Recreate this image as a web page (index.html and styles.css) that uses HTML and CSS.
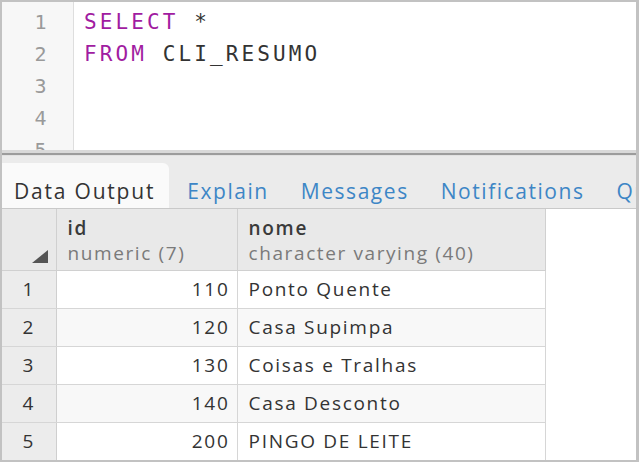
FILE: index.html
```html
<!DOCTYPE html>
<html>
<head>
<meta charset="utf-8">
<link rel="stylesheet" href="styles.css">
</head>
<body>
<div class="frame">
  <div class="editor">
    <div class="gutter">
      <div class="ln">1</div>
      <div class="ln">2</div>
      <div class="ln">3</div>
      <div class="ln">4</div>
      <div class="ln">5</div>
    </div>
    <div class="code">
      <div class="line"><span class="kw">SELECT</span> *</div>
      <div class="line"><span class="kw">FROM</span> CLI_RESUMO</div>
      <div class="line"></div>
      <div class="line"></div>
      <div class="line"></div>
    </div>
  </div>
  <div class="splitter"></div>
  <div class="tabs">
    <div class="tab active">Data Output</div>
    <div class="tab">Explain</div>
    <div class="tab">Messages</div>
    <div class="tab">Notifications</div>
    <div class="tab">Query History</div>
  </div>
  <div class="gridwrap">
    <table class="grid">
      <colgroup>
        <col class="c-rn"><col class="c-id"><col class="c-nome">
      </colgroup>
      <thead>
        <tr>
          <th class="rn-head"><span class="sort"></span></th>
          <th><div class="cname">id</div><div class="ctype">numeric (7)</div></th>
          <th><div class="cname">nome</div><div class="ctype">character varying (40)</div></th>
        </tr>
      </thead>
      <tbody>
        <tr><td class="rn">1</td><td class="num">110</td><td>Ponto Quente</td></tr>
        <tr class="alt"><td class="rn">2</td><td class="num">120</td><td>Casa Supimpa</td></tr>
        <tr><td class="rn">3</td><td class="num">130</td><td>Coisas e Tralhas</td></tr>
        <tr class="alt"><td class="rn">4</td><td class="num">140</td><td>Casa Desconto</td></tr>
        <tr><td class="rn">5</td><td class="num">200</td><td>PINGO DE LEITE</td></tr>
      </tbody>
    </table>
  </div>
</div>
</body>
</html>
```
FILE: styles.css
```css
* { box-sizing: border-box; }
html, body { margin: 0; padding: 0; background: #fff; }
.frame {
  width: 639px;
  height: 462px;
  border: 2px solid #c2c2c2;
  border-right-width: 3px;
  overflow: hidden;
  display: flex;
  flex-direction: column;
  font-family: "Open Sans", "Noto Sans", sans-serif;
}
.editor {
  height: 148px;
  flex: none;
  display: flex;
  overflow: hidden;
  background: #fff;
}
.gutter {
  width: 72px;
  background: #f7f7f7;
  border-right: 1px solid #dedede;
  padding-top: 4px;
}
.ln {
  height: 32px;
  line-height: 32px;
  text-align: center;
  padding-left: 6px;
  font-family: "DejaVu Sans Mono", monospace;
  font-size: 20px;
  color: #9a9a9a;
}
.code {
  padding-top: 4px;
  padding-left: 10px;
  font-family: "DejaVu Sans Mono", monospace;
  font-size: 21px;
  letter-spacing: 3.1px;
  color: #333;
}
.line { height: 32px; line-height: 32px; white-space: pre; }
.kw { color: #a11ca1; }
.splitter {
  flex: none;
  height: 6px;
  border-top: 3px solid #d9d9d9;
  border-bottom: 1px solid #e2e2e2;
  background: #9c9c9c;
}
.tabs {
  flex: none;
  height: 53px;
  background: #ebebeb;
  border-bottom: 1px solid #c9c9c9;
  display: flex;
  align-items: flex-end;
  white-space: nowrap;
  overflow: hidden;
}
.tab {
  flex: none;
  height: 45px;
  padding: 12px 16px 0 16px;
  line-height: 33px;
  font-size: 21px;
  letter-spacing: 1.55px;
  color: #3d86c6;
}
.tab.active {
  background: #fafafa;
  color: #333;
  letter-spacing: 1.8px;
  padding: 12px 14px 0 12px;
  border-top-right-radius: 6px;
  margin-right: 2px;
}
.gridwrap { flex: 1; background: #fff; }
.grid {
  border-collapse: collapse;
  table-layout: fixed;
  width: 543px;
  font-size: 19px;
  letter-spacing: 1.7px;
  color: #333;
}
.c-rn { width: 54px; }
.c-id { width: 181px; }
.c-nome { width: 308px; }
.grid th {
  height: 61px;
  background: #e9e9e9;
  border: 1px solid #d0d0d0;
  border-top: none;
  text-align: left;
  vertical-align: top;
  padding: 7px 11px 0 11px;
  font-weight: normal;
}
.grid th:first-child { border-left: none; }
.cname { font-weight: 600; line-height: 24px; color: #3a3a3a; }
.ctype { color: #7a7a7a; line-height: 26px; font-size: 19px; letter-spacing: 1.6px; }
.rn-head { position: relative; }
.sort {
  position: absolute;
  right: 8px;
  bottom: 7px;
  width: 0;
  height: 0;
  border-left: 16px solid transparent;
  border-bottom: 13px solid #555;
}
.grid td {
  height: 38px;
  border: 1px solid #d6d6d6;
  padding: 0 11px;
  white-space: nowrap;
  overflow: hidden;
}
.grid td:first-child { border-left: none; }
.grid tr:last-child td { border-bottom: none; }
.grid td.rn {
  background: #ececec;
  text-align: center;
  padding: 0;
  border-right-color: #cfcfcf;
}
.grid td.num { text-align: right; padding-right: 7px; }
.grid tr.alt td { background: #f8f8f8; }
.grid tr.alt td.rn { background: #ececec; }
```
